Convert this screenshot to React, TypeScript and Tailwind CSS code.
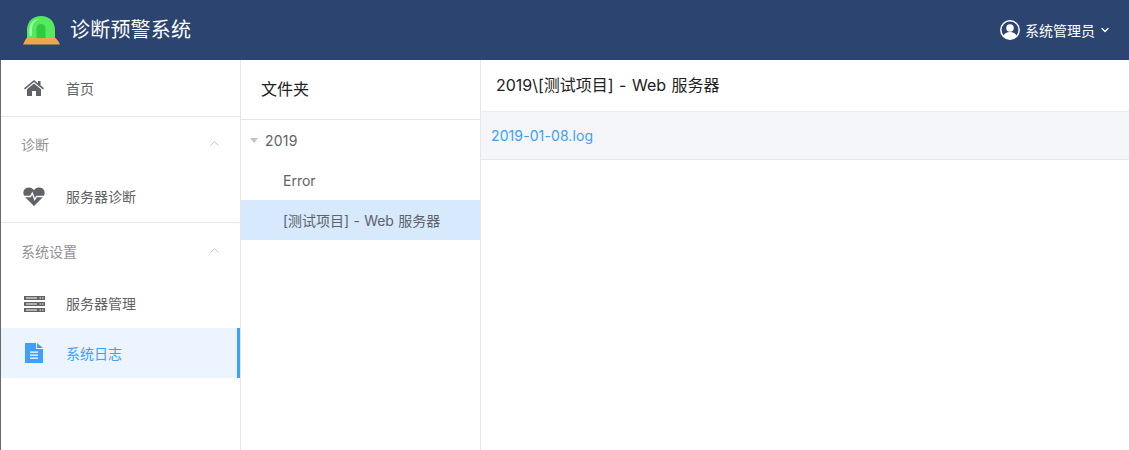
import { ChevronDown, ChevronUp } from "lucide-react";
import type { ReactNode } from "react";

const font = "font-['Inter','Noto_Sans_CJK_SC',sans-serif]";

function AlarmLogo() {
  return (
    <svg width="38" height="30" viewBox="0 0 38 30">
      <path d="M5 23V15C5 6.500 11 1 19 1s14 5.500 14 14v8z" fill="#55ea5e" />
      <path d="M7.500 21V15C7.500 9 11.500 4 18 3.500c-5 1.500-8 6-8 11.500v6z" fill="#a8f8ab" />
      <path d="M14.500 23v-9.500c0-2.800 1.800-4.500 4.500-4.500s4.500 1.700 4.500 4.500V23z" fill="#2fcb3e" />
      <path d="M4.500 23h29l3 3.500 1.500 3H1l1.500-3z" fill="#e9a94a" />
    </svg>
  );
}

function HomeIcon() {
  return (
    <svg width="20" height="16" viewBox="0 0 20 16" fill="#5f6368">
      <path d="M10 0 0 8.200l1 1.200L10 2l9 7.400 1-1.200-3.500-2.900V1h-2.500v2.200z" />
      <path d="M10 3.500 3 9.200V16h5v-5h4v5h5V9.200z" />
    </svg>
  );
}

function HeartIcon() {
  return (
    <svg width="22" height="19" viewBox="0 0 22 19">
      <path d="M11 19 2 10C-1 6.500 0 1 5.500.500 8 .3 10 1.500 11 3.200 12 1.500 14 .3 16.500.500 22 1 23 6.500 20 10z" fill="#5f6368" />
      <path d="M0 9.500h7.500l1.800-3.500 2.400 6.500 1.800-3h8.500" fill="none" stroke="#fff" strokeWidth="1.300" />
    </svg>
  );
}

function ServerIcon() {
  return (
    <svg width="21" height="16" viewBox="0 0 21 16" fill="#5f6368">
      <path d="M0 0h21v4H0zM0 6h21v4H0zM0 12h21v4H0z" />
      <path d="M2 1.500h11v1H2zM2 7.500h11v1H2zM2 13.500h11v1H2z" fill="#fff" />
      <path d="M15.500 1.500h1.500v1h-1.500zM18 1.500h1.500v1H18zM15.500 7.500h1.500v1h-1.500zM18 7.500h1.500v1H18zM15.500 13.500h1.500v1h-1.500zM18 13.500h1.500v1H18z" fill="#fff" />
    </svg>
  );
}

function FileIcon() {
  return (
    <svg width="18" height="20" viewBox="0 0 18 20">
      <path d="M0 0h11v6h7v14H0z" fill="#409eff" />
      <path d="M12 0l6 5h-6z" fill="#409eff" />
      <path d="M5 8.500h8v1.300H5zM5 11.500h8v1.300H5zM5 14.500h8v1.300H5z" fill="#fff" />
    </svg>
  );
}

function UserIcon() {
  return (
    <svg width="20" height="20" viewBox="0 0 20 20">
      <circle cx="10" cy="10" r="9.200" fill="#2c4470" stroke="#fff" strokeWidth="1.500" />
      <circle cx="10" cy="8" r="3.800" fill="#fff" />
      <path d="M3.500 16c1-3 3.500-4 6.500-4s5.500 1 6.500 4c-1.500 2-4 3-6.500 3s-5-1-6.500-3z" fill="#fff" />
    </svg>
  );
}

function MenuItem({ icon, label, className, active }: { icon: ReactNode; label: string; className: string; active?: boolean }) {
  return (
    <div className={`flex items-center ${className} ${active ? "bg-[#ecf5ff] text-[#409eff] border-r-[3px] border-[#409eff]" : "text-[#606266]"}`}>
      <div className="w-[65px] flex justify-center pl-[1px]">
        <div className="w-[22px] flex justify-center">{icon}</div>
      </div>
      <span className="text-[14px]">{label}</span>
    </div>
  );
}

function GroupTitle({ label, className }: { label: string; className: string }) {
  return (
    <div className={`flex items-center justify-between pl-[20px] pr-[18px] pb-[2px] text-[14px] text-[#909399] ${className}`}>
      <span>{label}</span>
      <ChevronUp size={15} strokeWidth={1.1} className="text-[#a8abb2] -mt-[2px]" />
    </div>
  );
}

export default function App() {
  return (
    <div className={`h-[450px] w-[1129px] overflow-hidden flex flex-col bg-white ${font}`}>
      <header className="h-[60px] shrink-0 bg-[#2c4470] flex items-center justify-between text-white pl-[22px] pr-[18px]">
        <div className="flex items-center gap-[10px]">
          <AlarmLogo />
          <span className="text-[20px] tracking-[0.2px]">诊断预警系统</span>
        </div>
        <div className="flex items-center">
          <UserIcon />
          <span className="text-[14px] ml-[5px] mr-[4px]">系统管理员</span>
          <ChevronDown size={12} strokeWidth={2.5} />
        </div>
      </header>

      <div className="flex flex-1 min-h-0">
        <aside className="w-[241px] shrink-0 border-l border-l-[#6a6a6a] border-r border-r-[#e6e6e6]">
          <MenuItem icon={<HomeIcon />} label="首页" className="h-[57px] border-b border-[#e6e6e6]" />
          <GroupTitle label="诊断" className="h-[57px]" />
          <MenuItem icon={<HeartIcon />} label="服务器诊断" className="h-[49px] pb-[3px] border-b border-[#e6e6e6]" />
          <GroupTitle label="系统设置" className="h-[58px]" />
          <MenuItem icon={<ServerIcon />} label="服务器管理" className="h-[47px] pb-[2px]" />
          <MenuItem icon={<FileIcon />} label="系统日志" className="h-[50px]" active />
        </aside>

        <section className="w-[240px] shrink-0 border-r border-[#e6e6e6]">
          <div className="h-[60px] border-b border-[#e6e6e6] flex items-center pl-[20px] pb-[2px] text-[16px] text-[#222]">文件夹</div>
          <div className="text-[14px] text-[#606266]">
            <div className="h-[40px] flex items-center pl-[9px]">
              <span className="w-0 h-0 border-x-[4px] border-x-transparent border-t-[5px] border-t-[#c0c4cc] mr-[7px]" />
              <span className="tracking-[0.2px]">2019</span>
            </div>
            <div className="h-[40px] flex items-center pl-[42px]">Error</div>
            <div className="h-[40px] flex items-center pl-[42px] bg-[#d6e9fd] [word-spacing:0.3px]">[测试项目] - Web 服务器</div>
          </div>
        </section>

        <main className="flex-1 min-w-0">
          <div className="h-[52px] border-b border-[#e9ecef] flex items-center pl-[15px] pb-[1px] text-[16px] text-[#222] [word-spacing:1px]">2019\[测试项目] - Web 服务器</div>
          <div className="h-[48px] bg-[#f4f6fa] border-b border-[#e6e6e6] flex items-center pl-[10px] text-[14px] text-[#409eff] tracking-[0.1px]">2019-01-08.log</div>
        </main>
      </div>
    </div>
  );
}
